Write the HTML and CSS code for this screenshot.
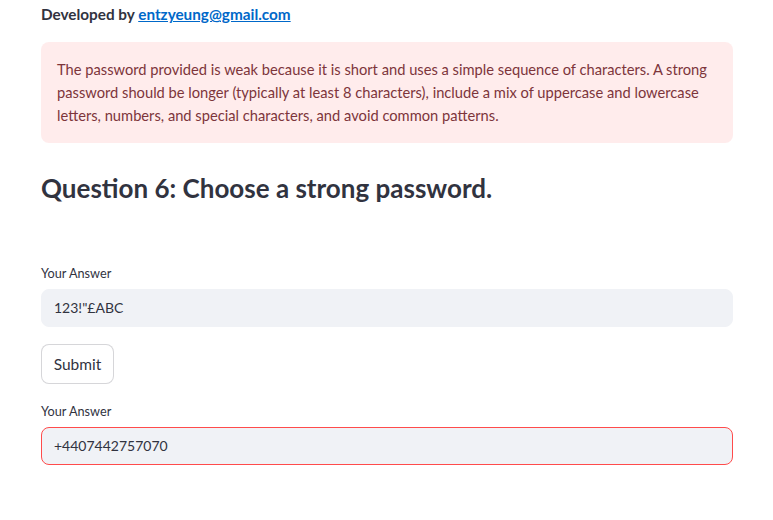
FILE: index.html
```html
<!DOCTYPE html>
<html>
<head>
<meta charset="utf-8">
<link rel="stylesheet" href="styles.css">
</head>
<body>
<main class="main">
  <p class="dev">Developed by <a class="link" href="#">entzyeung@gmail.com</a></p>
  <div class="alert">The password provided is weak because it is short and uses a simple sequence of characters. A strong password should be longer (typically at least 8 characters), include a mix of uppercase and lowercase letters, numbers, and special characters, and avoid common patterns.</div>
  <h2 class="question">Question 6: Choose a strong password.</h2>
  <div class="field field-first">
    <label class="label">Your Answer</label>
    <div class="input">123!"£ABC</div>
  </div>
  <button class="btn">Submit</button>
  <div class="field">
    <label class="label">Your Answer</label>
    <div class="input input-error">+4407442757070</div>
  </div>
</main>
</body>
</html>
```

FILE: styles.css
```css
* { box-sizing: border-box; }
html, body { margin: 0; padding: 0; background: #fff; }
body {
  font-family: Lato, "Noto Sans", sans-serif;
  color: rgb(49, 51, 63);
}
.main {
  padding: 0 40px 0 41px;
  display: flex;
  flex-direction: column;
}
.dev {
  margin: 4px 0 0 0;
  font-size: 15.3px;
  font-weight: 700;
  line-height: 20px;
}
.link { color: rgb(0, 104, 201); text-decoration: underline; }
.alert {
  margin-top: 18px;
  background: rgba(255, 43, 43, 0.09);
  color: rgb(125, 53, 59);
  border-radius: 8px;
  padding: 16px 16px;
  font-size: 14.7px;
  line-height: 23px;
  min-height: 101px;
}
.question {
  margin: 25px 0 0 0;
  font-size: 26px;
  font-weight: 700;
  line-height: 40px;
}
.field { display: flex; flex-direction: column; }
.field-first { margin-top: 55px; }
.label {
  font-size: 12.7px;
  line-height: 20px;
  margin-bottom: 6px;
}
.input {
  height: 38px;
  background: rgb(240, 242, 246);
  border-radius: 8px;
  border: 1px solid rgb(240, 242, 246);
  padding: 0 12px;
  font-size: 14px;
  line-height: 36px;
}
.input-error { border-color: rgb(255, 75, 75); }
.btn {
  align-self: flex-start;
  margin: 17px 0 17px 0;
  height: 40px;
  width: 73px;
  background: #fff;
  border: 1px solid rgba(49, 51, 63, 0.2);
  border-radius: 8px;
  font-family: inherit;
  font-size: 15.5px;
  color: rgb(49, 51, 63);
  padding: 0;
}
```
